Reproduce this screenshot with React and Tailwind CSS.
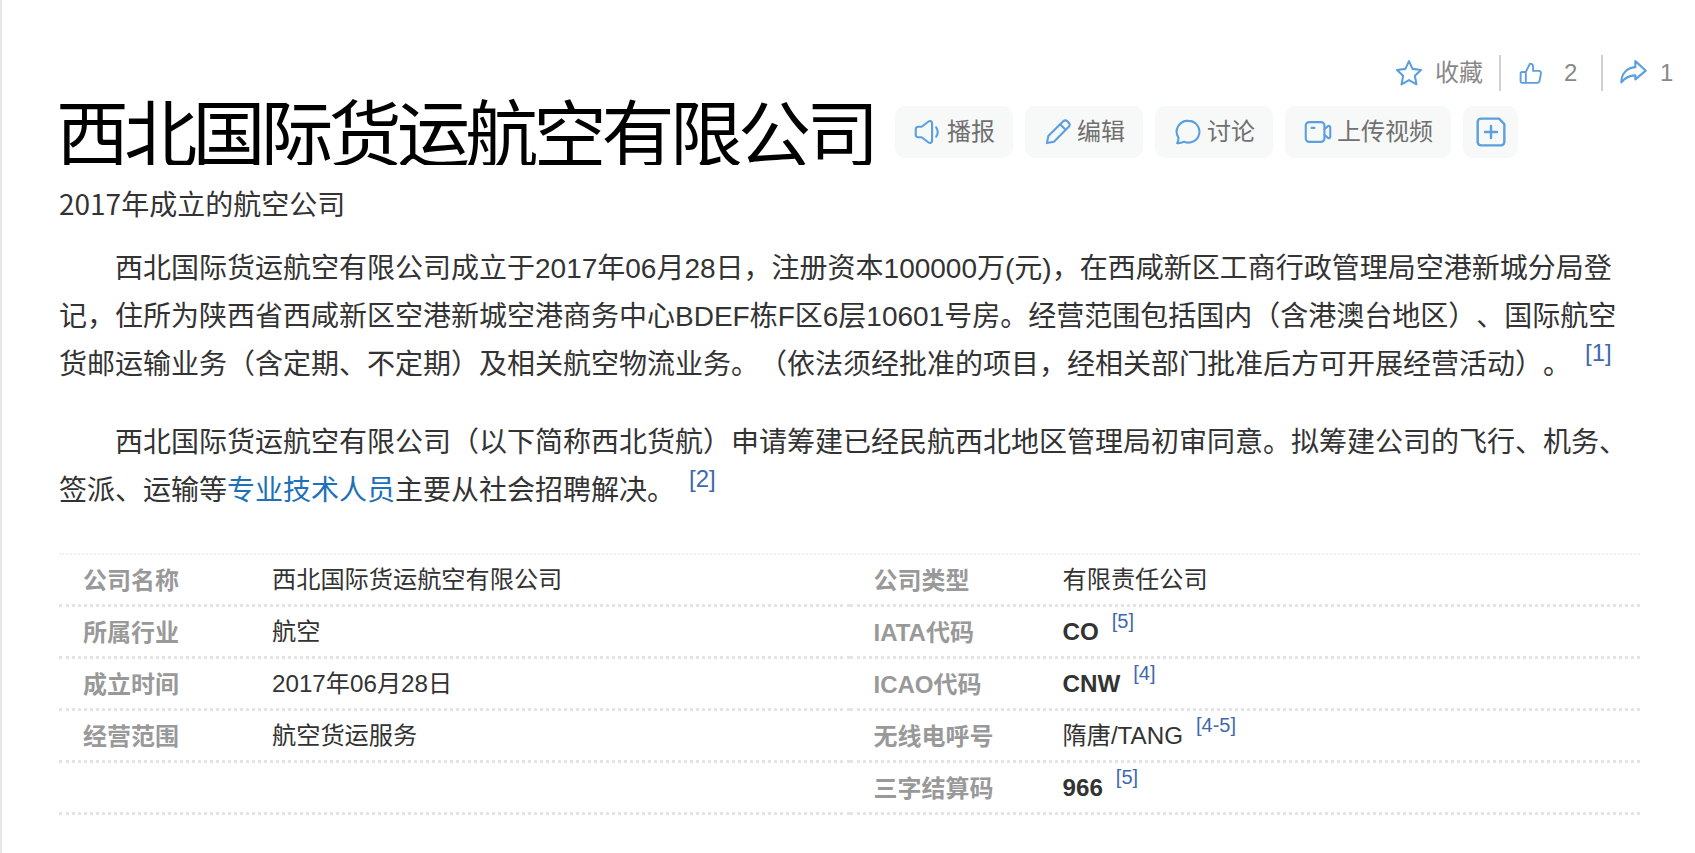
import React from "react";

const SANS = "font-['Liberation_Sans','Noto_Sans_CJK_SC',sans-serif]";

const rows = [
  ["公司名称", "西北国际货运航空有限公司", null, false],
  ["公司类型", "有限责任公司", null, false],
  ["所属行业", "航空", null, false],
  ["IATA代码", "CO", "[5]", true],
  ["成立时间", "2017年06月28日", null, false],
  ["ICAO代码", "CNW", "[4]", true],
  ["经营范围", "航空货运服务", null, false],
  ["无线电呼号", "隋唐/TANG", "[4-5]", false],
  ["", "", null, false],
  ["三字结算码", "966", "[5]", true],
];

const Icon = ({ children, className = "w-[28px] h-[28px]" }) => (
  <svg
    viewBox="0 0 24 24"
    fill="none"
    stroke="#5b9fdd"
    strokeWidth="1.8"
    strokeLinecap="round"
    strokeLinejoin="round"
    className={`${className} shrink-0`}
  >
    {children}
  </svg>
);

const Ref = ({ children, className = "" }) => (
  <sup className={`leading-none text-[#3f68ad] ${className}`}>{children}</sup>
);

const ToolButton = ({ icon, label }) => (
  <button className="h-[52px] pl-[19px] pr-[18px] flex items-center gap-[5px] rounded-[10px] bg-[#f7f8f8] text-[24px] text-[#707070]">
    {icon}
    <span>{label}</span>
  </button>
);

export default function App() {
  return (
    <div className={`min-h-screen overflow-hidden bg-white border-l-2 border-[#e6e6e6] pl-[57px] pt-[52px] ${SANS}`}>
      {/* Top actions */}
      <div className="h-[42px] flex items-center text-[24px] text-[#888]">
        <div className="ml-[1336px] flex items-center">
          <Icon>
            <path d="M12 1.800l3.100 6.700 7.200.9-5.300 5 1.400 7.300L12 18.100l-6.400 3.600 1.400-7.300-5.300-5 7.200-.9z" />
          </Icon>
          <span className="ml-[12px]">收藏</span>
        </div>
        <div className="ml-[16px] h-[36px] w-[2px] bg-[#d0d0d0]" />
        <div className="flex items-center pl-[17px] w-[100px]">
          <Icon className="w-[25px] h-[25px]">
            <path d="M7.500 10.500V21H4a1.500 1.500 0 0 1-1.500-1.500V12A1.500 1.500 0 0 1 4 10.500zM7.500 10.500L11.500 2.500c1.700 0 3 1.300 3 3V9.500H20c1.300 0 2.200 1.200 2 2.400l-1.300 7.200c-.2 1.100-1.100 1.900-2.200 1.900H7.500" />
          </Icon>
          <span className="ml-[21px]">2</span>
        </div>
        <div className="h-[36px] w-[2px] bg-[#d0d0d0]" />
        <div className="flex items-center pl-[16px]">
          <Icon>
            <path d="M14 1.800L23 10 14 17.500v-3.500c-4.500 0-8.500 1.500-12 6 0-7 4.500-12.500 12-13z" />
          </Icon>
          <span className="ml-[13px]">1</span>
        </div>
      </div>

      {/* Title */}
      <div className="-mt-[2px] h-[80px] flex items-center">
        <h1 className="-ml-[3px] self-start h-[73px] w-[816px] overflow-hidden text-[73px] leading-[75px] tracking-[-4.8px] text-black font-['Noto_Sans_CJK_SC',sans-serif] font-normal whitespace-nowrap">
          西北国际货运航空有限公司
        </h1>
        <div className="ml-[23px] flex items-center gap-[12px]">
          <ToolButton
            label="播报"
            icon={
              <Icon>
                <path d="M6.500 7.500L12.500 3c1.300-.9 3-.1 3 1.500v15c0 1.600-1.700 2.400-3 1.500l-6-4.500H3.500a2 2 0 0 1-2-2v-5a2 2 0 0 1 2-2z" />
                <path d="M19 8c1.700 2.500 1.700 5.500 0 8" />
              </Icon>
            }
          />
          <ToolButton
            label="编辑"
            icon={
              <Icon>
                <path d="M16.500 2.800a2.500 2.500 0 0 1 3.500 0l1.200 1.200a2.500 2.500 0 0 1 0 3.500L8.500 20.300 2.500 21.500l1.200-6z" />
                <path d="M14 5.500l4.500 4.500" />
              </Icon>
            }
          />
          <ToolButton
            label="讨论"
            icon={
              <Icon>
                <path d="M12.500 2.500a9.300 9.300 0 1 1-3.800 17.800c-2 1-4 1.300-6 1.200.8-1.400 1.300-3 1.100-4.700A9.300 9.300 0 0 1 12.500 2.500z" />
              </Icon>
            }
          />
          <ToolButton
            label="上传视频"
            icon={
              <Icon>
                <rect x="1.500" y="3.500" width="16" height="17" rx="3" />
                <path d="M17.500 9.500l3-2.500c.8-.6 2-.1 2 1v8c0 1.100-1.200 1.600-2 1l-3-2.500" />
                <path d="M6.500 8.500H9" />
              </Icon>
            }
          />
          <button className="w-[55px] h-[52px] flex items-center justify-center rounded-[10px] bg-[#f7f8f8]">
            <Icon className="w-[32px] h-[32px]">
              <path d="M4.500 2h13.500l4 4v13.500a2.500 2.500 0 0 1-2.500 2.500h-15A2.500 2.500 0 0 1 2 19.500v-15A2.500 2.500 0 0 1 4.500 2z" />
              <path d="M12 7.500v9M7.500 12h9" />
            </Icon>
          </button>
        </div>
      </div>

      {/* Subtitle */}
      <div className="mt-[11px] text-[28px] leading-[40px] text-[#333] font-['Noto_Sans_CJK_SC',sans-serif]">
        2017年成立的航空公司
      </div>

      {/* Summary */}
      <div className="mt-[22px] w-[1575px] text-[28px] leading-[48px] text-[#333] [text-spacing-trim:space-all]">
        <p className="indent-[56px]">
          西北国际货运航空有限公司成立于2017年06月28日，注册资本100000万(元)，在西咸新区工商行政管理局空港新城分局登记，住所为陕西省西咸新区空港新城空港商务中心BDEF栋F区6层10601号房。经营范围包括国内（含港澳台地区）、国际航空货邮运输业务（含定期、不定期）及相关航空物流业务。（依法须经批准的项目，经相关部门批准后方可开展经营活动）。
          <Ref className="ml-[14px] text-[24px] top-[-0.55em]">[1]</Ref>
        </p>
        <p className="mt-[30px] indent-[56px]">
          西北国际货运航空有限公司（以下简称西北货航）申请筹建已经民航西北地区管理局初审同意。拟筹建公司的飞行、机务、签派、运输等
          <a className="text-[#2070b8]">专业技术人员</a>
          主要从社会招聘解决。
          <Ref className="ml-[14px] text-[24px] top-[-0.55em]">[2]</Ref>
        </p>
      </div>

      {/* Basic info */}
      <div className="mt-[38px] w-[1581px] grid grid-cols-2 border-t-2 border-dotted border-[#f0f0f0]">
        {rows.map(([label, value, ref, strong], i) => (
          <div key={i} className="h-[52px] pt-[2px] flex items-center border-b-[3px] border-dotted border-[#e4e4e4] text-[24.2px]">
            <div className="w-[213px] pl-[24px] text-[24px] font-bold text-[#999]">{label}</div>
            <div className={`text-[#333] ${strong ? "font-bold" : ""}`}>
              {value}
              {ref && <Ref className="ml-[13px] font-normal text-[20px] top-[-0.6em]">{ref}</Ref>}
            </div>
          </div>
        ))}
      </div>
    </div>
  );
}
